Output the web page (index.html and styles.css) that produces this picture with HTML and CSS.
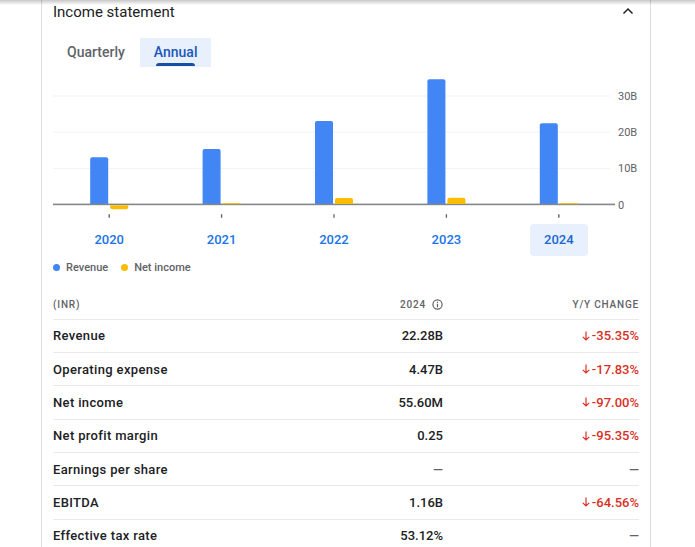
FILE: index.html
```html
<!DOCTYPE html>
<html lang="en">
<head>
<meta charset="utf-8">
<title>Income statement</title>
<link rel="stylesheet" href="styles.css">
</head>
<body>
<div class="shadow"></div>
<section class="card">
  <div class="head">
    <h2 class="title">Income statement</h2>
    <svg class="chev" width="12" height="8" viewBox="0 0 12 8"><path d="M1.5 6.5L6 2l4.5 4.5" fill="none" stroke="#202124" stroke-width="1.5"/></svg>
  </div>
  <div class="tabs">
    <div class="tab">Quarterly</div>
    <div class="tab active">Annual</div>
  </div>
  <svg class="chart" width="586" height="150" viewBox="0 0 586 150">
    <g fill="#f1f3f4">
      <rect x="0" y="25.5" width="557" height="1"/>
      <rect x="0" y="61.7" width="557" height="1"/>
      <rect x="0" y="97.9" width="557" height="1"/>
    </g>
    <g fill="#4285f4">
      <path d="M37.2 134V89.3Q37.2 87.3 39.2 87.3H53.2Q55.2 87.3 55.2 89.3V134Z"/>
      <path d="M149.6 134V81Q149.6 79 151.6 79H165.6Q167.6 79 167.6 81V134Z"/>
      <path d="M262 134V53Q262 51 264 51H278Q280 51 280 53V134Z"/>
      <path d="M374.4 134V11.3Q374.4 9.3 376.4 9.3H390.4Q392.4 9.3 392.4 11.3V134Z"/>
      <path d="M486.8 134V55.3Q486.8 53.3 488.8 53.3H502.8Q504.8 53.3 504.8 55.3V134Z"/>
    </g>
    <rect x="0" y="133.6" width="562" height="1.6" fill="#80868b"/>
    <g fill="#fbbc04">
      <path d="M57.2 135.2V137.3Q57.2 139.3 59.2 139.3H73.2Q75.2 139.3 75.2 137.3V135.2Z"/>
      <rect x="169.6" y="133.2" width="18" height="1"/>
      <path d="M282 134V130Q282 128 284 128H298Q300 128 300 130V134Z"/>
      <path d="M394.4 134V129.7Q394.4 127.7 396.4 127.7H410.4Q412.4 127.7 412.4 129.7V134Z"/>
      <rect x="506.8" y="133.2" width="18" height="1"/>
    </g>
    <g fill="#5f6368">
      <rect x="55.5" y="144.3" width="1.4" height="3.4"/>
      <rect x="167.9" y="144.3" width="1.4" height="3.4"/>
      <rect x="280.3" y="144.3" width="1.4" height="3.4"/>
      <rect x="392.7" y="144.3" width="1.4" height="3.4"/>
      <rect x="505.1" y="144.3" width="1.4" height="3.4"/>
    </g>
    <g class="ylab" fill="#5f6368" font-size="11">
      <text x="565" y="30">30B</text>
      <text x="565" y="66.2">20B</text>
      <text x="565" y="102.4">10B</text>
      <text x="565" y="138.6">0</text>
    </g>
  </svg>
  <div class="years">
    <div class="year"><span class="ylbl">2020</span></div>
    <div class="year"><span class="ylbl">2021</span></div>
    <div class="year"><span class="ylbl">2022</span></div>
    <div class="year"><span class="ylbl">2023</span></div>
    <div class="year"><span class="ylbl sel">2024</span></div>
  </div>
  <div class="legend">
    <span class="dot blue"></span><span class="lg">Revenue</span>
    <span class="dot yellow"></span><span class="lg">Net income</span>
  </div>
  <div class="table">
    <div class="row thead">
      <div class="c1">(INR)</div>
      <div class="c2">2024 <svg class="info" width="11" height="11" viewBox="0 0 12 12"><circle cx="6" cy="6" r="5" fill="none" stroke="#5f6368" stroke-width="1.3"/><rect x="5.35" y="5.2" width="1.3" height="3.8" fill="#5f6368"/><rect x="5.35" y="3" width="1.3" height="1.3" fill="#5f6368"/></svg></div>
      <div class="c3">Y/Y change</div>
    </div>
    <div class="row"><div class="c1">Revenue</div><div class="c2">22.28B</div><div class="c3 neg"><svg class="arr" width="8" height="10" viewBox="0 0 8 10"><path d="M4 0.5V9M0.8 5.8L4 9l3.2-3.2" fill="none" stroke="#d93025" stroke-width="1.2"/></svg>-35.35%</div></div>
    <div class="row"><div class="c1">Operating expense</div><div class="c2">4.47B</div><div class="c3 neg"><svg class="arr" width="8" height="10" viewBox="0 0 8 10"><path d="M4 0.5V9M0.8 5.8L4 9l3.2-3.2" fill="none" stroke="#d93025" stroke-width="1.2"/></svg>-17.83%</div></div>
    <div class="row"><div class="c1">Net income</div><div class="c2">55.60M</div><div class="c3 neg"><svg class="arr" width="8" height="10" viewBox="0 0 8 10"><path d="M4 0.5V9M0.8 5.8L4 9l3.2-3.2" fill="none" stroke="#d93025" stroke-width="1.2"/></svg>-97.00%</div></div>
    <div class="row"><div class="c1">Net profit margin</div><div class="c2">0.25</div><div class="c3 neg"><svg class="arr" width="8" height="10" viewBox="0 0 8 10"><path d="M4 0.5V9M0.8 5.8L4 9l3.2-3.2" fill="none" stroke="#d93025" stroke-width="1.2"/></svg>-95.35%</div></div>
    <div class="row"><div class="c1">Earnings per share</div><div class="c2 dash">—</div><div class="c3 dash">—</div></div>
    <div class="row"><div class="c1">EBITDA</div><div class="c2">1.16B</div><div class="c3 neg"><svg class="arr" width="8" height="10" viewBox="0 0 8 10"><path d="M4 0.5V9M0.8 5.8L4 9l3.2-3.2" fill="none" stroke="#d93025" stroke-width="1.2"/></svg>-64.56%</div></div>
    <div class="row"><div class="c1">Effective tax rate</div><div class="c2">53.12%</div><div class="c3 dash">—</div></div>
  </div>
</section>
</body>
</html>
```
FILE: styles.css
```css
html, body {
  margin: 0;
  padding: 0;
  background: #fff;
  overflow: hidden;
}
body {
  font-family: Roboto, "Liberation Sans", sans-serif;
  color: #202124;
  height: 547px;
}
.shadow {
  position: fixed;
  top: 0;
  left: 0;
  right: 0;
  height: 5px;
  background: linear-gradient(rgba(0,0,0,0.22), rgba(0,0,0,0));
  z-index: 5;
}
.card {
  margin-left: 41px;
  width: 586px;
  padding: 2px 11px 0 11px;
  border-left: 1px solid #dadce0;
  border-right: 1px solid #dadce0;
  height: 545px;
  overflow: hidden;
}
.head {
  display: flex;
  align-items: center;
  justify-content: space-between;
  height: 20px;
}
.title {
  margin: 0;
  font-size: 15px;
  font-weight: 400;
  line-height: 20px;
}
.chev {
  margin-right: 5px;
  margin-top: -2px;
}
.tabs {
  display: flex;
  gap: 1px;
  margin-top: 16px;
  height: 29px;
}
.tab {
  padding: 0 14px;
  font-size: 14px;
  font-weight: 500;
  color: #5f6368;
  line-height: 29px;
  position: relative;
}
.tab.active {
  background: #e8f0fe;
  color: #1a57b9;
}
.tab.active::after {
  content: "";
  position: absolute;
  left: 16px;
  right: 16px;
  bottom: 1px;
  height: 3px;
  border-radius: 3px 3px 0 0;
  background: #174ea6;
}
.chart {
  display: block;
  margin-top: 3px;
}
.ylab {
  font-family: Roboto, "Liberation Sans", sans-serif;
}
.years {
  display: grid;
  grid-template-columns: repeat(5, 1fr);
  width: 562px;
  margin-top: 4px;
  height: 32px;
}
.year {
  display: flex;
  justify-content: center;
}
.ylbl {
  width: 58px;
  height: 32px;
  line-height: 32px;
  text-align: center;
  font-size: 13px;
  font-weight: 500;
  color: #1a73e8;
  border-radius: 4px;
}
.ylbl.sel {
  background: #e8f0fe;
  color: #1967d2;
}
.legend {
  display: flex;
  align-items: center;
  margin-top: 3px;
  height: 16px;
  font-size: 11px;
  font-weight: 500;
  color: #5f6368;
}
.dot {
  width: 7px;
  height: 7px;
  border-radius: 50%;
  margin-right: 6px;
}
.dot.blue { background: #4285f4; }
.dot.yellow { background: #fbbc04; margin-left: 13px; }
.table {
  margin-top: 15px;
}
.row {
  display: grid;
  grid-template-columns: 1fr 120px 196px;
  align-items: center;
  height: 32.33px;
  border-bottom: 1px solid #e8eaed;
  font-size: 13px;
  font-weight: 500;
}
.row .c1 {
  letter-spacing: 0.35px;
}
.row.thead {
  height: 28.6px;
  font-size: 10px;
  letter-spacing: 0.8px;
  color: #5f6368;
}
.row.thead .c1 { letter-spacing: 0.8px; }
.thead .c3 { text-transform: uppercase; }
.c2, .c3 {
  text-align: right;
  display: flex;
  justify-content: flex-end;
  align-items: center;
}
.info {
  margin-left: 6px;
}
.neg { color: #d93025; }
.arr { margin-right: 2px; }
.dash { color: #5f6368; }
```
